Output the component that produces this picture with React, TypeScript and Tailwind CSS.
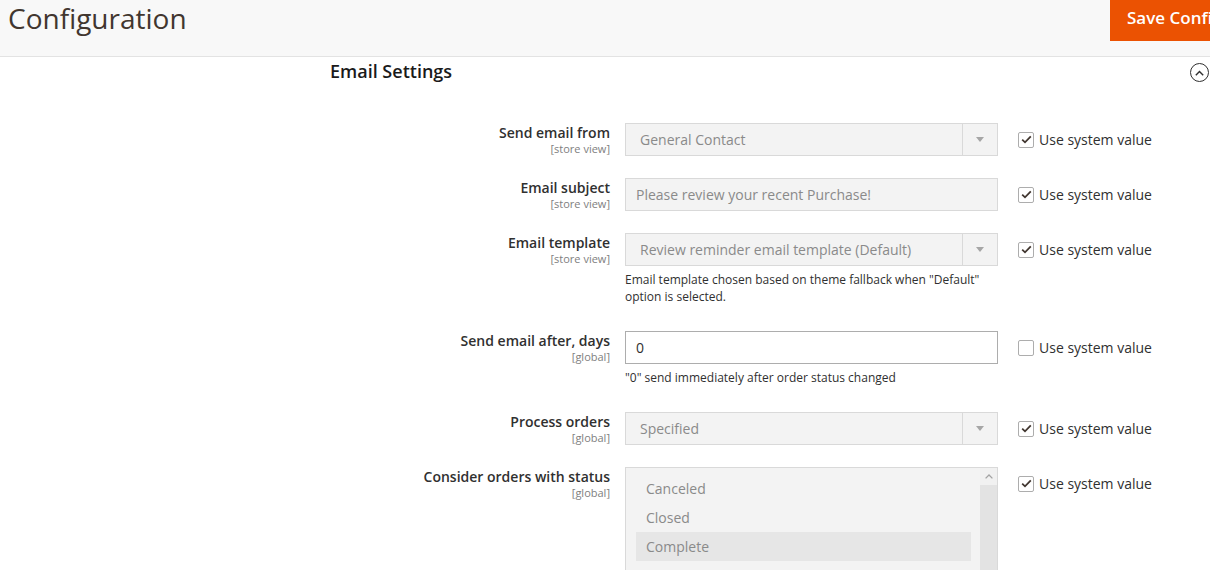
import React from 'react';

const font = { fontFamily: '"Open Sans", "Noto Sans", sans-serif' };

function Scope({ label, scope }: { label: string; scope: string }) {
  return (
    <div className="w-[280px] shrink-0 text-right">
      <div className="text-[14px] font-semibold leading-[20px] text-[#303030]">{label}</div>
      <div className="text-[11px] leading-[11px] text-[#808080]">[{scope}]</div>
    </div>
  );
}

function SystemValue({ checked }: { checked: boolean }) {
  return (
    <div className="ml-[20px] flex h-[33px] items-center">
      <span className="flex h-[16px] w-[16px] items-center justify-center rounded-[2px] border border-[#adadad] bg-white">
        {checked && (
          <svg width="11" height="9" viewBox="0 0 11 9">
            <path d="M1.2 4.6 L4 7.3 L9.8 1.3" fill="none" stroke="#41362f" strokeWidth="1.8" />
          </svg>
        )}
      </span>
      <span className="ml-[5px] text-[14px] text-[#303030]">Use system value</span>
    </div>
  );
}

function Select({ value }: { value: string }) {
  return (
    <div className="flex h-[33px] w-[373px] items-center border border-[#d9d9d9] bg-[#f3f3f3]">
      <span className="flex-1 pl-[14px] text-[14px] text-[#8a8a8a]">{value}</span>
      <span className="flex h-full w-[35px] items-center justify-center border-l border-[#d9d9d9]">
        <svg width="8" height="5" viewBox="0 0 8 5">
          <path d="M0 0 H8 L4 5 Z" fill="#a6a6a6" />
        </svg>
      </span>
    </div>
  );
}

function TextBox({ value, disabled }: { value: string; disabled?: boolean }) {
  return (
    <div
      className={
        disabled
          ? 'flex h-[33px] w-[373px] items-center border border-[#d9d9d9] bg-[#f3f3f3] pl-[10px] text-[14px] text-[#8a8a8a]'
          : 'flex h-[33px] w-[373px] items-center border border-[#adadad] bg-white pl-[10px] text-[14px] text-[#303030]'
      }
    >
      {value}
    </div>
  );
}

function Note({ children }: { children: React.ReactNode }) {
  return <p className="mt-[5px] mb-[4px] w-[370px] text-[12px] leading-[17px] text-[#303030]">{children}</p>;
}

function Row({
  label,
  scope,
  checked,
  children,
}: {
  label: string;
  scope: string;
  checked: boolean;
  children: React.ReactNode;
}) {
  return (
    <div className="mb-[22px] flex items-start">
      <Scope label={label} scope={scope} />
      <div className="ml-[15px] w-[373px] shrink-0">{children}</div>
      <SystemValue checked={checked} />
    </div>
  );
}

export default function App() {
  const statuses = ['Canceled', 'Closed', 'Complete', 'Processing'];

  return (
    <div className="h-[570px] w-[1210px] overflow-hidden bg-white" style={font}>
      <header className="flex h-[57px] overflow-hidden border-b border-[#e3e3e3] bg-[#f8f8f8]">
        <h1 className="w-[1110px] shrink-0 pl-[8px] text-[28px] font-normal leading-[36px] text-[#41362f]">
          Configuration
        </h1>
        <button className="h-[41px] shrink-0 whitespace-nowrap bg-[#eb5202] px-[17px] pb-[5px] text-[17px] font-semibold leading-[24px] text-white">
          Save Config
        </button>
      </header>

      <section className="pl-[330px] pr-[1px]">
        <div className="flex h-[26px] items-end justify-between">
          <h2 className="text-[18px] font-semibold leading-[24px] text-[#1a1a1a]">Email Settings</h2>
          <span className="mb-[1px] flex h-[19px] w-[19px] items-center justify-center rounded-full border border-[#303030]">
            <svg width="9" height="6" viewBox="0 0 9 6">
              <path d="M0.8 5.2 L4.5 1.4 L8.2 5.2" fill="none" stroke="#303030" strokeWidth="1.4" />
            </svg>
          </span>
        </div>

        <div className="pt-[40px]">
          <Row label="Send email from" scope="store view" checked>
            <Select value="General Contact" />
          </Row>
          <Row label="Email subject" scope="store view" checked>
            <TextBox value="Please review your recent Purchase!" disabled />
          </Row>
          <Row label="Email template" scope="store view" checked>
            <Select value="Review reminder email template (Default)" />
            <Note>Email template chosen based on theme fallback when "Default" option is selected.</Note>
          </Row>
          <Row label="Send email after, days" scope="global" checked={false}>
            <TextBox value="0" />
            <Note>"0" send immediately after order status changed</Note>
          </Row>
          <Row label="Process orders" scope="global" checked>
            <Select value="Specified" />
          </Row>
          <Row label="Consider orders with status" scope="global" checked>
            <div className="flex h-[150px] w-[373px] border border-[#d9d9d9] bg-[#f3f3f3]">
              <ul className="flex-1 pl-[10px] pt-[6px]">
                {statuses.map((s) => (
                  <li
                    key={s}
                    className={
                      s === 'Complete'
                        ? 'h-[29px] bg-[#e6e6e6] pl-[10px] text-[14px] leading-[29px] text-[#8a8a8a]'
                        : 'h-[29px] pl-[10px] text-[14px] leading-[29px] text-[#8a8a8a]'
                    }
                  >
                    {s}
                  </li>
                ))}
              </ul>
              <div className="ml-[9px] flex w-[17px] flex-col">
                <div className="flex h-[17px] items-center justify-center bg-[#f1f1f1]">
                  <svg width="8" height="5" viewBox="0 0 8 5">
                    <path d="M0.6 4.4 L4 1 L7.4 4.4" fill="none" stroke="#a3a3a3" strokeWidth="1.3" />
                  </svg>
                </div>
                <div className="flex-1 bg-[#e3e3e3]" />
              </div>
            </div>
          </Row>
        </div>
      </section>
    </div>
  );
}
